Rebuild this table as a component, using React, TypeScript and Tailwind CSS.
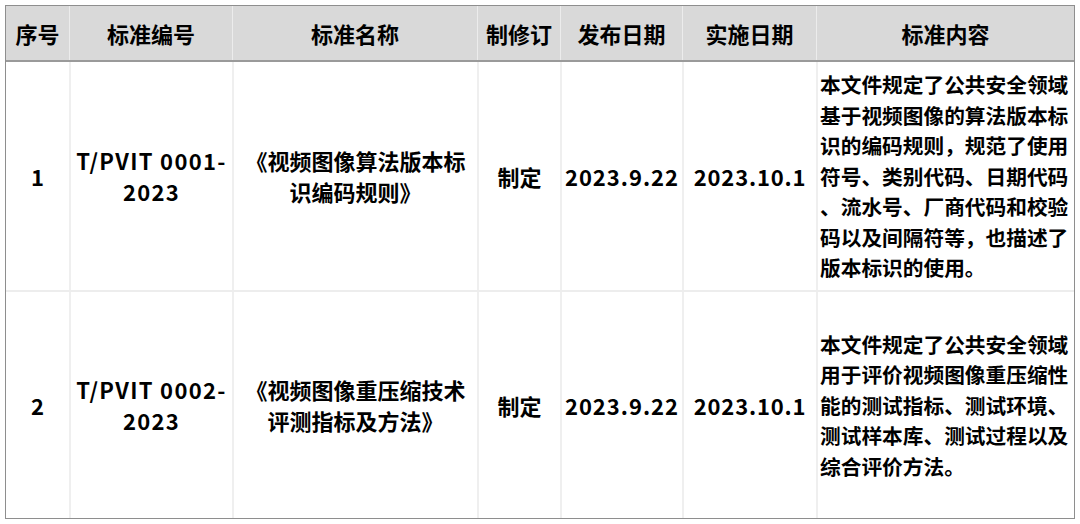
const font = { fontFamily: '"Noto Sans CJK SC", "Noto Sans", sans-serif' };

const headers = ['序号', '标准编号', '标准名称', '制修订', '发布日期', '实施日期', '标准内容'];

const rows = [
  {
    no: '1',
    code: ['T/PVIT 0001-', '2023'],
    name: ['《视频图像算法版本标', '识编码规则》'],
    kind: '制定',
    pub: '2023.9.22',
    impl: '2023.10.1',
    content: [
      '本文件规定了公共安全领域',
      '基于视频图像的算法版本标',
      '识的编码规则，规范了使用',
      '符号、类别代码、日期代码',
      '、流水号、厂商代码和校验',
      '码以及间隔符等，也描述了',
      '版本标识的使用。',
    ],
  },
  {
    no: '2',
    code: ['T/PVIT 0002-', '2023'],
    name: ['《视频图像重压缩技术', '评测指标及方法》'],
    kind: '制定',
    pub: '2023.9.22',
    impl: '2023.10.1',
    content: [
      '本文件规定了公共安全领域',
      '用于评价视频图像重压缩性',
      '能的测试指标、测试环境、',
      '测试样本库、测试过程以及',
      '综合评价方法。',
    ],
  },
];

const cols = 'grid grid-cols-[63px_163px_245px_83px_122px_134px_258px]';

function Lines({ lines }: { lines: string[] }) {
  return (
    <>
      {lines.map((l, i) => (
        <div key={i} className="whitespace-nowrap">
          {l}
        </div>
      ))}
    </>
  );
}

export default function App() {
  return (
    <div className="w-[1080px] h-[524px] bg-white pt-[5px] pl-[5px]" style={font}>
      <div className="w-[1070px] border border-[#8e8e8e] text-black font-bold">
        {/* header */}
        <div className={`${cols} h-[56px] bg-[#d9d9d9] border-b-2 border-[#9a9a9a] text-[22px]`}>
          {headers.map((h, i) => (
            <div
              key={h}
              className={`flex items-center justify-center ${i > 0 ? 'border-l border-[#ececec]' : ''}`}
            >
              {h}
            </div>
          ))}
        </div>

        {rows.map((r, idx) => (
          <div
            key={r.no}
            className={`${cols} h-[228px] text-[22px] ${idx > 0 ? 'border-t-2 border-[#ededed]' : ''}`}
          >
            <div className="flex items-center justify-center">{r.no}</div>
            <div className="flex flex-col items-center justify-center border-l-2 border-[#efefef] leading-[31px] tracking-[1.3px]">
              <Lines lines={r.code} />
            </div>
            <div className="flex flex-col items-center justify-center border-l-2 border-[#efefef] leading-[31px]">
              <Lines lines={r.name} />
            </div>
            <div className="flex items-center justify-center border-l-2 border-[#efefef]">{r.kind}</div>
            <div className="flex items-center justify-center border-l-2 border-[#efefef] tracking-[1px]">{r.pub}</div>
            <div className="flex items-center justify-center border-l-2 border-[#efefef] tracking-[0.8px]">{r.impl}</div>
            <div className="flex flex-col justify-center border-l-2 border-[#efefef] pl-[2px] text-[20.7px] leading-[30.5px]">
              <Lines lines={r.content} />
            </div>
          </div>
        ))}
      </div>
    </div>
  );
}
